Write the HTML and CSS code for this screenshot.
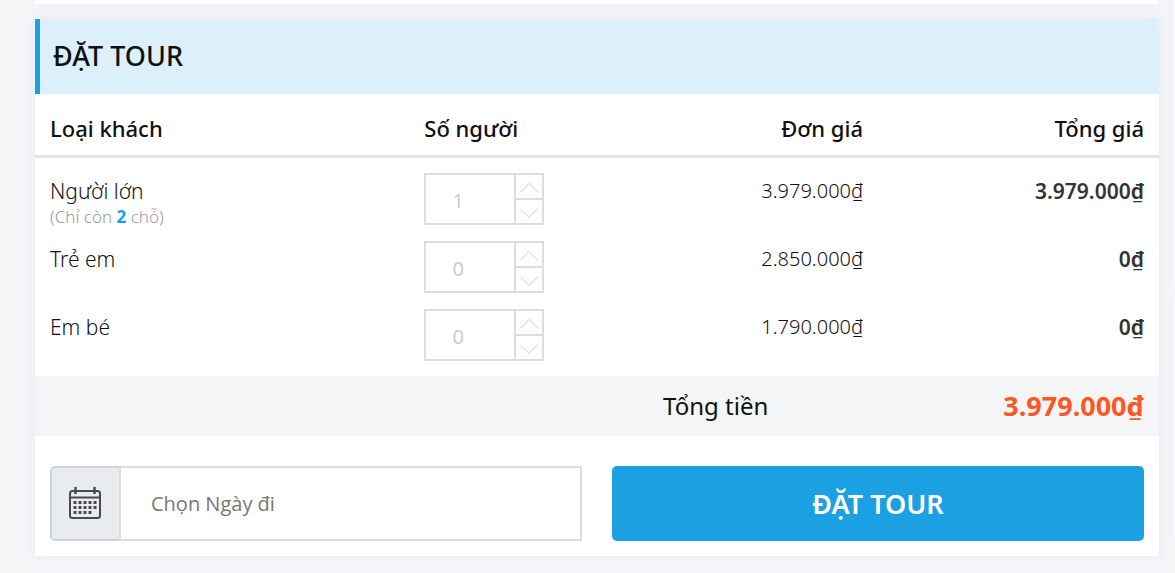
FILE: index.html
```html
<!DOCTYPE html>
<html lang="vi">
<head>
<meta charset="utf-8">
<meta name="viewport" content="width=device-width, initial-scale=1">
<title>Đặt tour</title>
<link rel="stylesheet" href="styles.css">
</head>
<body>
<svg class="sprite" aria-hidden="true">
  <symbol id="up" viewBox="0 0 20 12"><path d="M1 10.500 10 1.500l9 9" fill="none" stroke="currentColor"/></symbol>
  <symbol id="down" viewBox="0 0 20 12"><path d="M1 1.500l9 9 9-9" fill="none" stroke="currentColor"/></symbol>
</svg>
<div class="page">
  <main class="main">
    <div class="panel panel-previous"></div>
    <form class="panel booking">
      <h2 class="booking-title">ĐẶT TOUR</h2>
      <table class="prices">
        <thead>
          <tr><th class="col-type" scope="col">Loại khách</th><th class="col-count" scope="col">Số người</th><th class="col-price num" scope="col">Đơn giá</th><th class="col-total num" scope="col">Tổng giá</th></tr>
        </thead>
        <tbody>
          <tr>
            <td><label for="adult">Người lớn</label><small class="remaining">(Chỉ còn <b>2</b> chỗ)</small></td>
            <td class="cell-spinner"><div class="spinner"><input id="adult" class="spinner-input" type="text" inputmode="numeric" value="1"><div class="spinner-buttons"><button class="spinner-button" type="button" aria-label="Tăng người lớn"><svg class="chevron"><use href="#up"/></svg></button><button class="spinner-button" type="button" aria-label="Giảm người lớn"><svg class="chevron"><use href="#down"/></svg></button></div></div></td>
            <td class="num price">3.979.000₫</td><td class="num subtotal">3.979.000₫</td>
          </tr>
          <tr>
            <td><label for="child">Trẻ em</label></td>
            <td class="cell-spinner"><div class="spinner"><input id="child" class="spinner-input" type="text" inputmode="numeric" value="0"><div class="spinner-buttons"><button class="spinner-button" type="button" aria-label="Tăng trẻ em"><svg class="chevron"><use href="#up"/></svg></button><button class="spinner-button" type="button" aria-label="Giảm trẻ em"><svg class="chevron"><use href="#down"/></svg></button></div></div></td>
            <td class="num price">2.850.000₫</td><td class="num subtotal">0₫</td>
          </tr>
          <tr>
            <td><label for="infant">Em bé</label></td>
            <td class="cell-spinner"><div class="spinner"><input id="infant" class="spinner-input" type="text" inputmode="numeric" value="0"><div class="spinner-buttons"><button class="spinner-button" type="button" aria-label="Tăng em bé"><svg class="chevron"><use href="#up"/></svg></button><button class="spinner-button" type="button" aria-label="Giảm em bé"><svg class="chevron"><use href="#down"/></svg></button></div></div></td>
            <td class="num price">1.790.000₫</td><td class="num subtotal">0₫</td>
          </tr>
        </tbody>
      </table>
      <div class="total"><span class="total-label">Tổng tiền</span><strong class="total-value">3.979.000₫</strong></div>
      <div class="actions">
        <div class="date">
          <label class="date-icon" for="date" aria-label="Ngày đi">
            <svg width="32" height="32" viewBox="0 0 32 32" fill="none" stroke="#4a4a4a" stroke-width="2">
              <rect x="1" y="4" width="30" height="27" rx="2.500"/>
              <path d="M2 10.500h28"/>
              <path d="M6.500 0v7M25.500 0v7" stroke-width="2.500"/>
              <path d="M4.500 15.500h24M4.500 20.500h24M4.500 25.500h19" stroke-width="3" stroke-dasharray="3 2"/>
            </svg>
          </label>
          <input id="date" class="date-input" type="text" placeholder="Chọn Ngày đi">
        </div>
        <button class="submit" type="submit">ĐẶT TOUR</button>
      </div>
    </form>
  </main>
  <aside class="side"><div class="panel side-top"></div><div class="panel side-bottom"></div></aside>
</div>
</body>
</html>
```

FILE: styles.css
```css
* { box-sizing: border-box; }
body {
  margin: 0;
  background: #f3f5f7;
  color: #111;
  font: 20px/30px "Noto Sans", "Open Sans", sans-serif;
  overflow-x: hidden;
}
input, button { font: inherit; }
.sprite { display: none; }
.page { display: flex; gap: 15px; padding-left: 35px; }
.main { flex: 1; min-width: 0; padding-bottom: 17px; }
.panel { background: #fff; box-shadow: 0 0 10px #e6eaef; }
.panel-previous { height: 4px; margin-bottom: 15px; }
.booking-title {
  margin: 0;
  padding: 19px 13px 20px;
  border-left: 5px solid #1ba0e2;
  background: #dcf0fa;
  font-size: 27px;
  line-height: 36px;
  font-weight: 500;
}
.prices { width: 100%; border-collapse: separate; border-spacing: 0; table-layout: fixed; }
.prices th {
  padding: 19px 15px 12px;
  border-bottom: 3px solid #e4e4e4;
  font-size: 22px;
  font-weight: 500;
  text-align: left;
}
.prices td { padding: 18px 15px 0; vertical-align: top; font-size: 21px; font-weight: 300; }
.col-type { width: 33.3%; }
.col-count { width: 25%; }
.col-total { width: 25%; }
.prices th.num, .prices td.num { padding-left: 0; text-align: right; }
.prices .price { font-size: 20px; }
.prices .subtotal { color: #333; font-weight: 600; }
.remaining { display: block; padding-top: 1px; color: #999; font-size: 17px; line-height: 19px; font-weight: 300; }
.remaining b { color: #1ba0e2; font-weight: 700; }
.prices td.cell-spinner { padding: 15px 15px 1px; }
.spinner { display: flex; width: 120px; height: 52px; border: 2px solid #ddd; }
.spinner-input {
  flex: 1;
  min-width: 0;
  padding: 3px 24px 0 0;
  border: 0;
  background: #fff;
  color: #ccc;
  font-size: 20px;
  font-weight: 400;
  text-align: center;
}
.spinner-buttons { display: flex; flex-direction: column; width: 28px; border-left: 2px solid #ddd; }
.spinner-button {
  flex: 1;
  display: grid;
  place-items: center;
  padding: 3px 0 0;
  border: 0;
  background: #fff;
  color: #ccc;
}
.spinner-button + .spinner-button { border-top: 2px solid #ddd; }
.chevron { width: 20px; height: 12px; }
.total {
  display: grid;
  grid-template-columns: 2fr 1fr;
  align-items: center;
  margin-top: 14px;
  padding: 12px 15px;
  background: #f3f5f7;
  line-height: 36px;
  text-align: right;
}
.total-label { padding-right: 11px; font-size: 24px; font-weight: 400; }
.total-value { color: #ff5722; font-size: 27px; font-weight: 700; }
.actions { display: grid; grid-template-columns: 1fr 1fr; gap: 30px; padding: 30px 15px 15px; }
.date { display: flex; min-width: 0; height: 75px; }
.date-icon {
  display: grid;
  place-items: center;
  width: 69px;
  padding: 0 2px 2px 0;
  border: 2px solid #ced4da;
  border-right: 0;
  border-radius: 5px 0 0 5px;
  background: #e9ecef;
}
.date-input {
  flex: 1;
  min-width: 0;
  padding: 0 30px;
  border: 2px solid #ddd;
  background: #fff;
  color: #333;
  font-family: "Open Sans", "Noto Sans", sans-serif;
}
.date-input::placeholder { color: #777; opacity: 1; }
.submit {
  padding: 0;
  border: 0;
  border-radius: 5px;
  background: #1ba0e2;
  color: #fff;
  font-size: 27px;
  font-weight: 600;
}
.side { display: flex; flex-direction: column; gap: 15px; width: 1px; }
.side-top { height: 282px; }
.side-bottom { height: 243px; }
```
